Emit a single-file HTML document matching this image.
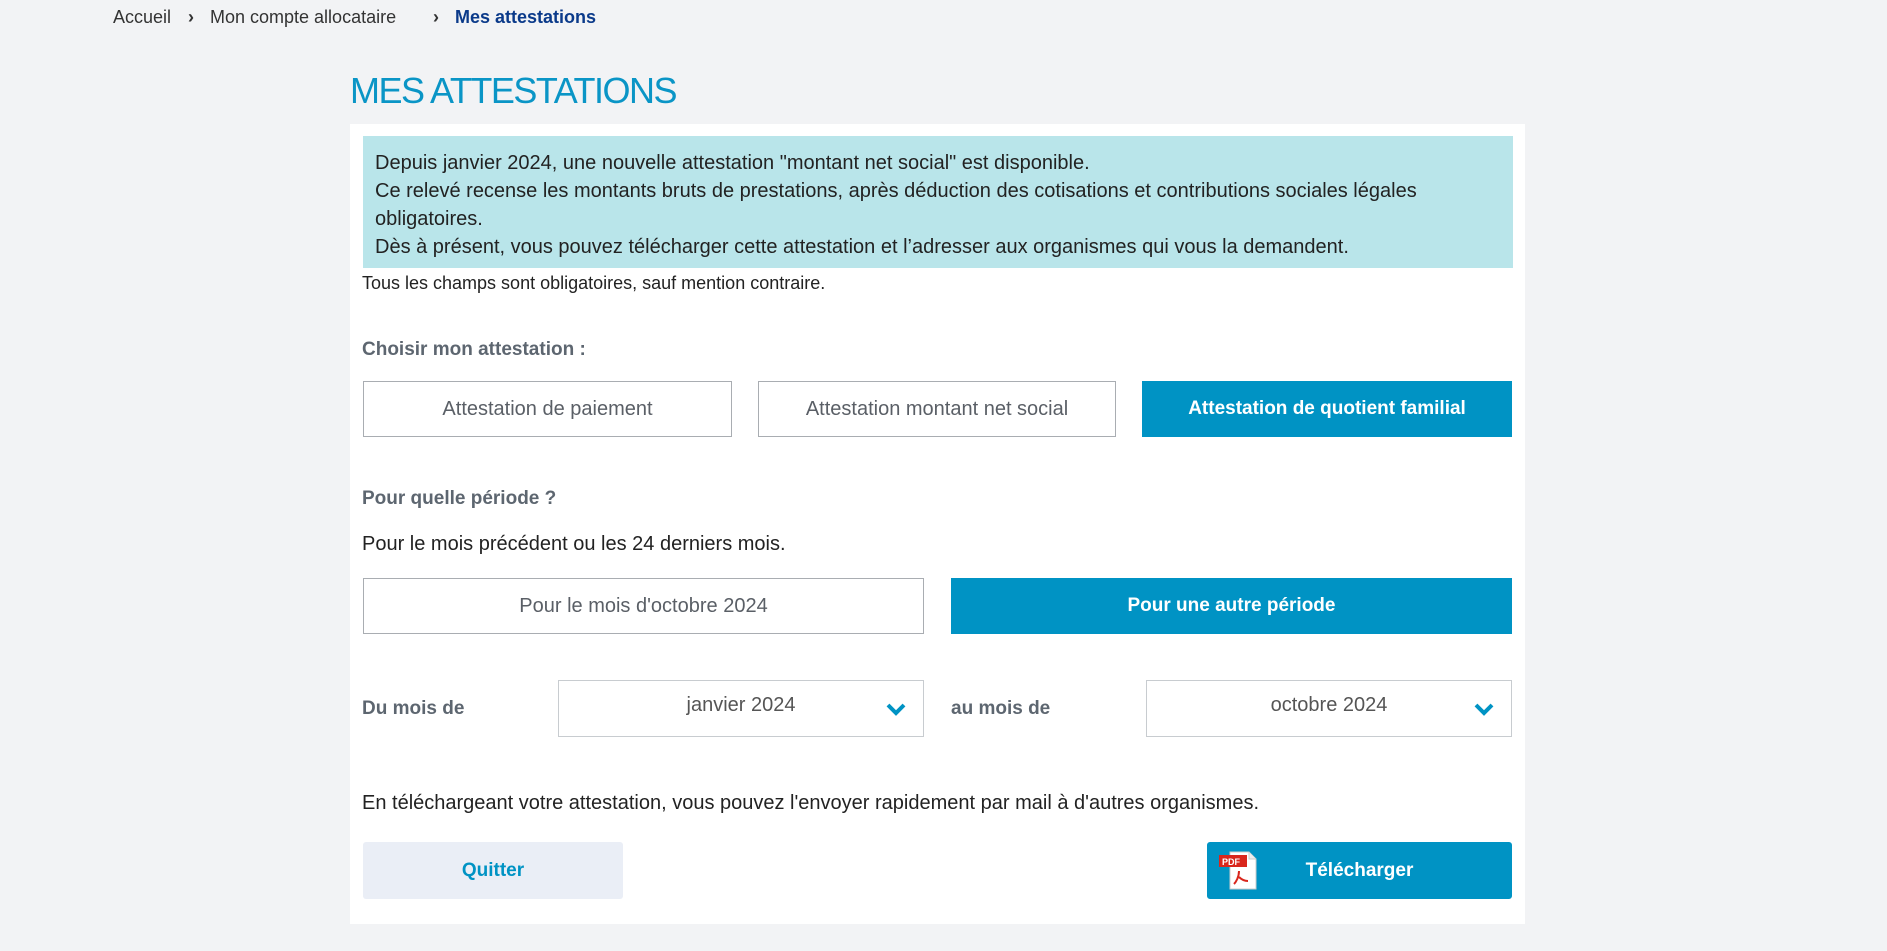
<!DOCTYPE html>
<html><head><meta charset="utf-8"><style>
*{box-sizing:border-box;margin:0;padding:0}
body{width:1887px;height:951px;background:#f2f3f5;font-family:"Liberation Sans",Arial,sans-serif;position:relative;overflow:hidden;color:#222}
.a{position:absolute;white-space:nowrap}
.bc{font-size:18px;color:#333;top:7px}
.btn{position:absolute;display:flex;align-items:center;justify-content:center;font-size:20px;color:#5a5f66;border:1px solid #a9adb2;background:#fff}
.on{background:#0093c4;border-color:#0093c4;color:#fff;font-weight:bold;font-size:19px}
.lbl{font-size:19px;font-weight:bold;color:#5d6670}
.sel{position:absolute;border:1px solid #c8ccd0;background:#fff;font-size:20px;color:#555;display:flex;align-items:center;justify-content:center}
.sel svg{position:absolute;right:16px;top:21px}
</style></head><body>
<div class="a bc" style="left:113px">Accueil</div>
<div class="a bc" style="left:188px;font-weight:bold">›</div>
<div class="a bc" style="left:210px">Mon compte allocataire</div>
<div class="a bc" style="left:433px;font-weight:bold">›</div>
<div class="a bc" style="left:455px;color:#0b3a8a;font-weight:bold">Mes attestations</div>
<div class="a" style="left:350px;top:70px;font-size:36px;color:#0a95c6;font-weight:300;letter-spacing:-1.5px">MES ATTESTATIONS</div>
<div class="a" style="left:350px;top:124px;width:1175px;height:800px;background:#fff"></div>
<div class="a" style="left:363px;top:136px;width:1150px;height:132px;background:#b9e5ea"></div>
<div class="a" style="left:375px;top:149px;font-size:20px;line-height:28px;color:#222">Depuis janvier 2024, une nouvelle attestation "montant net social" est disponible.<br>Ce relevé recense les montants bruts de prestations, après déduction des cotisations et contributions sociales légales<br>obligatoires.<br>Dès à présent, vous pouvez télécharger cette attestation et l’adresser aux organismes qui vous la demandent.</div>
<div class="a" style="left:362px;top:273px;font-size:18px;color:#222">Tous les champs sont obligatoires, sauf mention contraire.</div>
<div class="a lbl" style="left:362px;top:339px">Choisir mon attestation :</div>
<div class="btn" style="left:363px;top:381px;width:369px;height:56px">Attestation de paiement</div>
<div class="btn" style="left:758px;top:381px;width:358px;height:56px">Attestation montant net social</div>
<div class="btn on" style="left:1142px;top:381px;width:370px;height:56px">Attestation de quotient familial</div>
<div class="a lbl" style="left:362px;top:488px">Pour quelle période ?</div>
<div class="a" style="left:362px;top:533px;font-size:20px">Pour le mois précédent ou les 24 derniers mois.</div>
<div class="btn" style="left:363px;top:578px;width:561px;height:56px">Pour le mois d'octobre 2024</div>
<div class="btn on" style="left:951px;top:578px;width:561px;height:56px">Pour une autre période</div>
<div class="a lbl" style="left:362px;top:698px">Du mois de</div>
<div class="sel" style="left:558px;top:680px;width:366px;height:57px"><span style="margin-top:-6px">janvier 2024</span><svg width="22" height="14" viewBox="0 0 22 14"><path d="M3 3l8 8 8-8" fill="none" stroke="#0093c4" stroke-width="4"/></svg></div>
<div class="a lbl" style="left:951px;top:698px">au mois de</div>
<div class="sel" style="left:1146px;top:680px;width:366px;height:57px"><span style="margin-top:-6px">octobre 2024</span><svg width="22" height="14" viewBox="0 0 22 14"><path d="M3 3l8 8 8-8" fill="none" stroke="#0093c4" stroke-width="4"/></svg></div>
<div class="a" style="left:362px;top:792px;font-size:20px">En téléchargeant votre attestation, vous pouvez l'envoyer rapidement par mail à d'autres organismes.</div>
<div class="btn" style="left:363px;top:842px;width:260px;height:57px;background:#eaeef6;border:none;border-radius:3px;color:#0093c4;font-weight:bold;font-size:19px">Quitter</div>
<div class="btn on" style="left:1207px;top:842px;width:305px;height:57px;border-radius:3px">Télécharger</div>
<svg class="a" style="left:1218px;top:851px" width="44" height="40" viewBox="0 0 44 40"><path d="M12 1h19l7 7v30H12z" fill="#fff" stroke="#ccc"/><path d="M31 1v7h7" fill="#eee" stroke="#ccc"/><rect x="1" y="4" width="28" height="12" fill="#d9261c"/><text x="4" y="14" font-size="9" font-weight="bold" fill="#fff" font-family="Liberation Sans">PDF</text><path d="M21 20c0 6-3 11-5 13M21 26c3 3 6 4 9 4" fill="none" stroke="#d9261c" stroke-width="2"/></svg>
</body></html>
